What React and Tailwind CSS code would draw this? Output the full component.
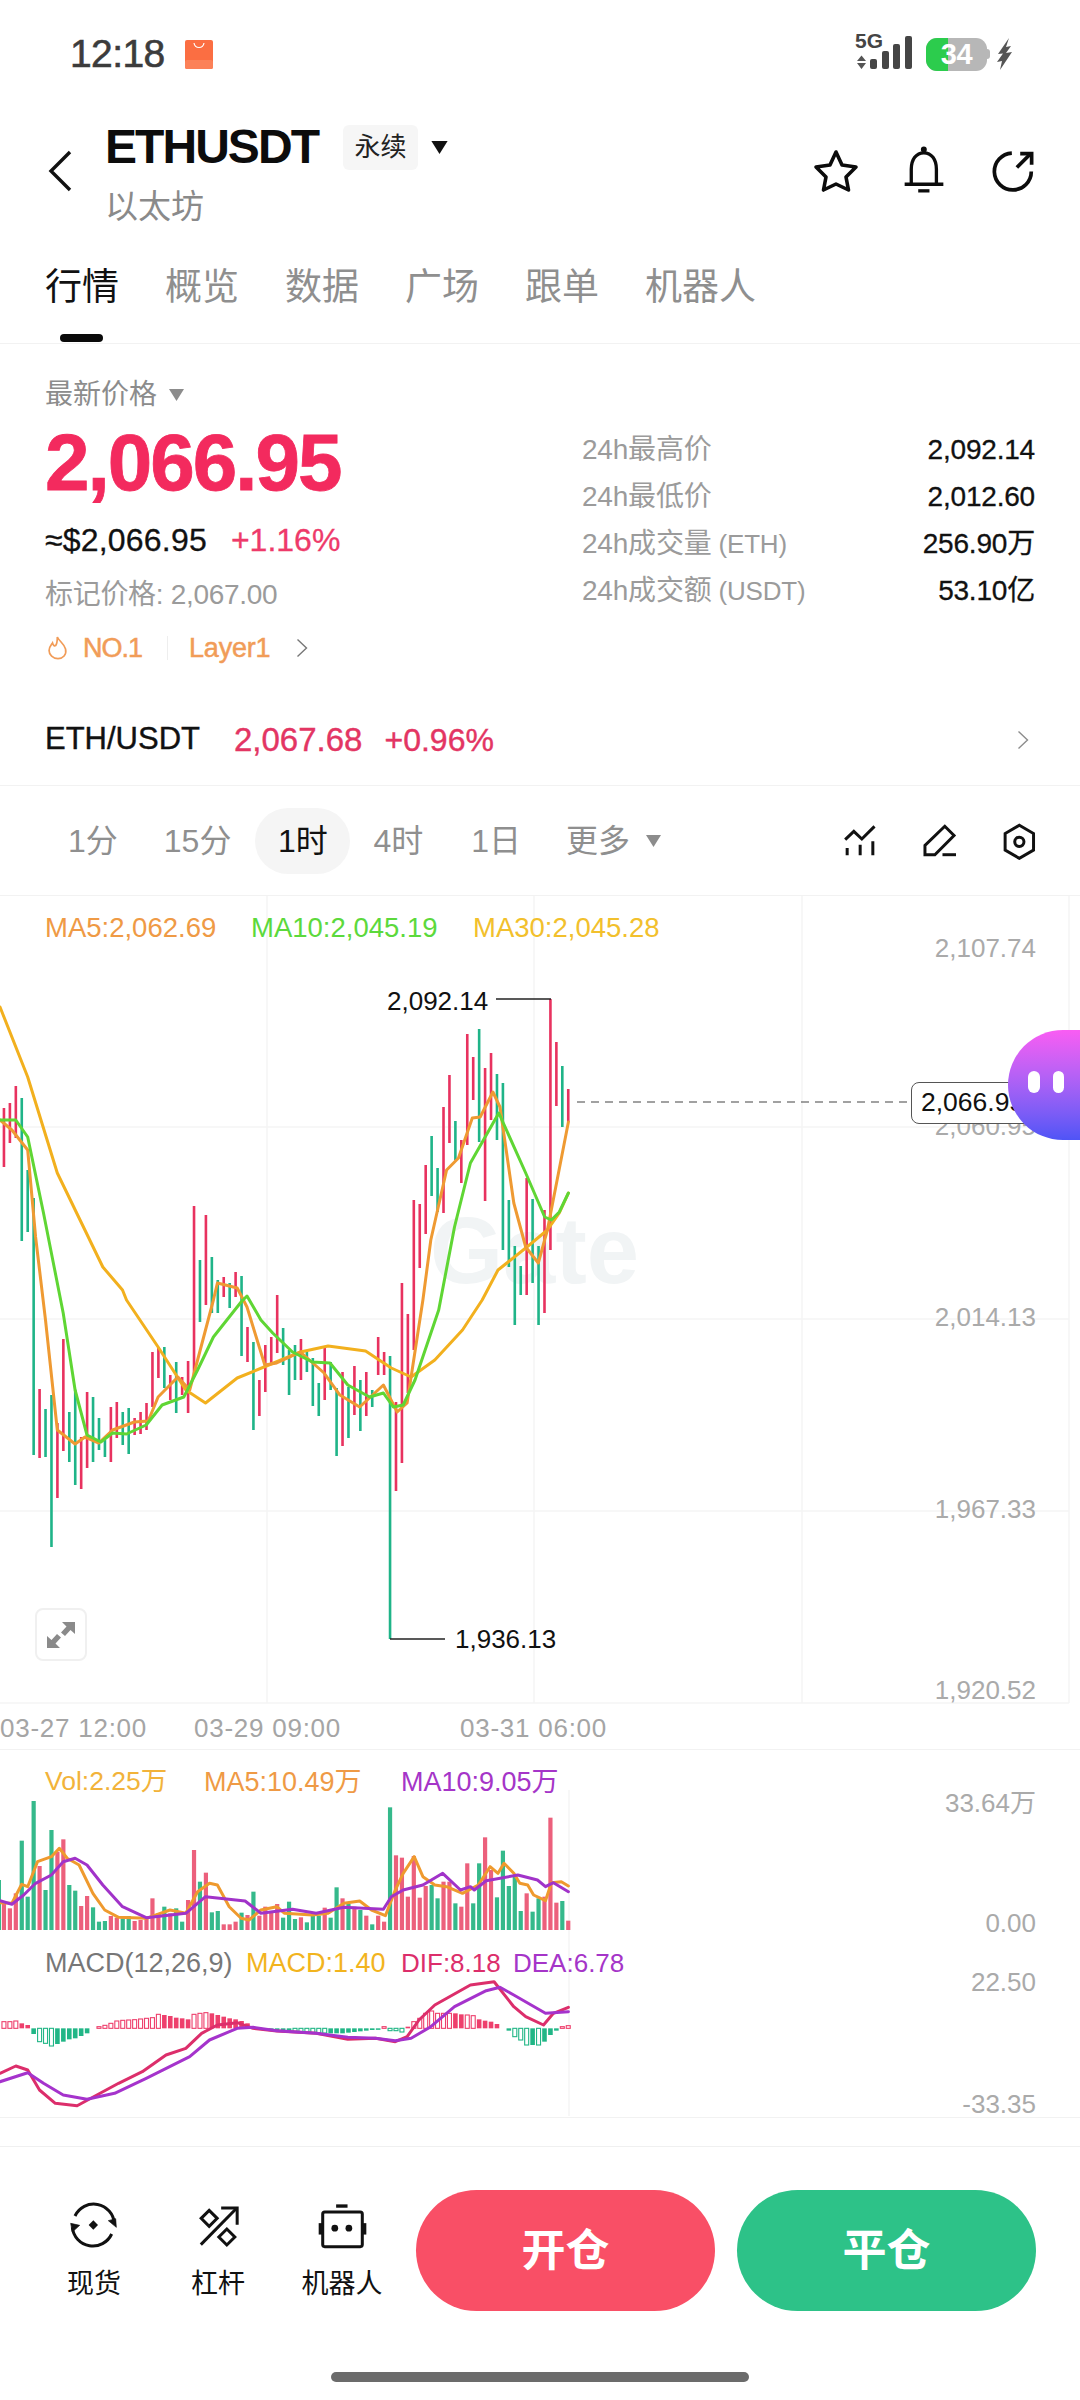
const R = "#e8325f";
const G = "#1fb488";
const X = (i) => 3.95 + 5.94 * i;
const ZX = (z) => z / 2.53;

// [top, bottom, red?] for each candle, in page pixels
const candles = [
  [1108,1167,1],[1103,1143,1],[1086,1138,1],[1098,1241,0],[1170,1232,0],[1198,1455,0],[1389,1458,1],[1409,1457,0],
  [1395,1547,0],[1423,1498,1],[1339,1451,1],[1412,1462,0],[1390,1485,0],[1437,1489,1],[1392,1468,1],[1397,1462,0],
  [1418,1450,0],[1440,1457,0],[1407,1462,1],[1402,1438,1],[1412,1445,0],[1408,1454,0],[1418,1435,1],[1412,1434,1],
  [1403,1430,1],[1352,1407,1],[1347,1378,1],[1347,1388,0],[1375,1400,1],[1362,1413,0],[1377,1395,1],[1361,1413,1],
  [1206,1377,1],[1260,1322,0],[1215,1305,1],[1257,1313,0],[1280,1313,0],[1277,1297,1],[1283,1308,0],[1272,1297,1],
  [1276,1356,0],[1327,1362,1],[1342,1430,0],[1380,1416,1],[1345,1392,1],[1337,1363,1],[1295,1353,1],[1328,1365,0],
  [1350,1395,0],[1345,1380,0],[1339,1380,1],[1352,1372,0],[1358,1406,0],[1383,1416,0],[1347,1400,1],[1362,1390,0],
  [1388,1456,0],[1372,1446,1],[1387,1438,0],[1366,1415,1],[1380,1431,0],[1372,1416,1],[1390,1407,0],[1337,1375,1],
  [1352,1375,1],[1356,1639,0],[1402,1491,1],[1283,1463,1],[1314,1393,1],[1200,1350,1],[1204,1268,1],[1165,1234,1],
  [1136,1196,0],[1168,1212,0],[1107,1213,1],[1075,1143,1],[1121,1160,0],[1140,1183,1],[1034,1145,1],[1057,1100,1],
  [1029,1142,0],[1068,1201,1],[1053,1120,1],[1074,1140,0],[1083,1250,0],[1200,1267,0],[1246,1325,0],[1266,1295,0],
  [1178,1295,1],[1199,1283,0],[1246,1325,0],[1210,1313,1],[999,1250,1],[1042,1106,1],[1066,1127,0],[1089,1122,1],
];

const ma30 = [[0,1007],[70,1077],[145,1173],[260,1267],[310,1290],[320,1300],[400,1347],[470,1390],[520,1403],[600,1378],[680,1365],[760,1352],[830,1346],[925,1351],[990,1368],[1040,1377],[1100,1360],[1170,1330],[1220,1300],[1260,1270],[1330,1248],[1385,1230],[1415,1213],[1438,1193]];
const ma10 = [[0,1120],[40,1120],[70,1137],[110,1213],[160,1313],[190,1390],[220,1435],[255,1442],[285,1433],[320,1434],[370,1425],[410,1405],[465,1397],[500,1370],[540,1337],[610,1302],[625,1296],[660,1320],[690,1333],[740,1352],[790,1362],[835,1363],[880,1385],[935,1397],[970,1393],[995,1407],[1020,1405],[1050,1380],[1110,1310],[1150,1227],[1190,1163],[1262,1113],[1330,1173],[1378,1217],[1395,1220],[1415,1212],[1438,1193]];
const ma5 = [[0,1120],[30,1130],[70,1150],[90,1237],[115,1320],[145,1430],[190,1444],[215,1437],[250,1443],[285,1430],[340,1422],[375,1421],[400,1397],[450,1377],[480,1390],[540,1300],[550,1283],[600,1288],[625,1307],[670,1365],[700,1363],[760,1352],[820,1373],[860,1395],[910,1407],[970,1385],[1005,1412],[1030,1403],[1070,1300],[1090,1240],[1130,1170],[1160,1158],[1195,1118],[1215,1117],[1247,1092],[1265,1107],[1300,1203],[1330,1247],[1362,1263],[1385,1230],[1438,1122]];

// top of the volume bar (zoomed units), red?
const vol = [[458,1],[475,1],[430,1],[272,0],[440,0],[153,0],[348,1],[420,0],[240,0],[305,1],[268,1],[405,0],[422,0],[468,1],[438,1],[472,0],[515,0],[513,0],[498,1],[503,1],[505,0],[498,0],[513,1],[510,1],[503,1],[445,1],[490,1],[470,0],[490,1],[475,0],[515,0],[450,1],[300,1],[395,0],[368,1],[487,0],[483,0],[523,1],[523,1],[515,1],[488,0],[495,1],[425,0],[497,1],[470,1],[488,1],[462,1],[503,0],[455,0],[507,0],[502,1],[517,0],[495,0],[497,0],[473,1],[503,0],[412,0],[445,1],[462,0],[470,1],[480,0],[497,1],[523,0],[497,1],[515,1],[172,0],[316,1],[323,1],[440,1],[318,1],[443,1],[408,1],[405,0],[445,0],[395,1],[395,1],[460,0],[470,1],[340,1],[460,0],[340,0],[262,1],[360,1],[442,0],[302,0],[408,0],[380,0],[483,0],[430,1],[485,0],[445,0],[440,1],[203,1],[458,1],[453,0],[512,1]];
const volMa5 = [[0,458],[30,460],[55,403],[70,410],[95,335],[130,320],[150,295],[170,325],[200,345],[235,430],[265,480],[300,502],[370,505],[430,480],[470,490],[500,425],[530,400],[550,405],[580,470],[610,505],[630,510],[660,480],[700,470],[720,490],[790,495],[830,490],[870,460],[910,453],[940,480],[975,497],[1000,420],[1020,370],[1048,320],[1070,380],[1100,405],[1130,410],[1170,430],[1210,405],[1240,350],[1260,370],[1275,340],[1300,370],[1315,400],[1335,405],[1350,435],[1380,452],[1395,398],[1420,395],[1438,408]];
const volMa10 = [[0,452],[30,463],[60,435],[90,400],[130,375],[160,335],[190,325],[220,345],[260,405],[310,470],[370,503],[470,490],[520,440],[620,453],[660,490],[740,478],[800,490],[870,472],[970,478],[990,440],[1020,420],[1070,405],[1120,370],[1165,420],[1190,410],[1200,420],[1230,392],[1310,375],[1360,390],[1380,410],[1400,398],[1438,425]];

const dif = [[0,970],[40,948],[70,960],[100,1020],[140,1060],[195,1067],[230,1045],[300,1000],[360,965],[420,915],[470,895],[510,850],[550,825],[600,818],[640,835],[700,843],[800,850],[880,868],[950,865],[1000,875],[1030,860],[1060,810],[1100,765],[1190,705],[1250,695],[1300,770],[1330,800],[1375,825],[1400,790],[1438,772]];
const dea = [[0,995],[70,968],[110,1000],[160,1035],[220,1048],[290,1030],[370,985],[480,920],[530,870],[600,835],[640,832],[700,842],[800,850],[880,862],[950,865],[1000,872],[1040,865],[1090,830],[1150,770],[1230,722],[1265,712],[1300,735],[1380,790],[1438,785]];

// index, end of bar (zoomed units), hollow?
const macd = [[0,815,1],[1,815,1],[2,813,1],[3,820,0],[4,825,0],[5,852,0],[6,875,1],[7,880,1],[8,888,1],[9,882,0],[10,875,0],[11,868,0],[12,865,0],[13,858,0],[14,850,0],[16,830,1],[17,826,1],[18,820,1],[19,813,1],[20,811,1],[21,810,1],[22,809,1],[23,807,1],[24,805,1],[25,803,1],[26,793,1],[27,795,0],[28,798,0],[29,803,0],[30,805,0],[31,808,0],[32,793,1],[33,790,1],[34,788,1],[35,790,0],[36,795,0],[37,800,0],[38,805,0],[39,808,0],[40,813,0],[41,820,0],[42,830,0],[43,840,0],[44,840,0],[45,840,0],[46,840,0],[47,840,0],[48,842,0],[49,844,1],[50,845,1],[51,847,1],[52,848,1],[53,848,1],[54,849,1],[55,850,0],[56,850,0],[57,850,0],[58,848,0],[59,846,0],[60,844,0],[61,842,0],[62,840,0],[63,838,0],[64,830,1],[65,842,1],[66,842,1],[67,846,1],[68,830,0],[69,815,1],[70,805,1],[71,790,1],[72,783,1],[73,790,1],[74,790,1],[75,790,1],[76,790,0],[77,793,0],[78,795,1],[79,797,1],[80,808,0],[81,812,0],[82,815,0],[83,822,0],[85,842,0],[86,860,1],[87,870,1],[88,885,1],[89,885,0],[90,885,1],[91,875,0],[92,855,0],[93,842,0],[94,830,1],[95,827,1]];

const pts = (a, base) => a.map(([x, y]) => `${ZX(x).toFixed(1)},${(base === undefined ? y : base + y / 3).toFixed(1)}`).join(" ");

function Line({ data, base, color, w = 3 }) {
  return <polyline points={pts(data, base)} fill="none" stroke={color} strokeWidth={w} strokeLinejoin="round" strokeLinecap="round" />;
}

function Tri({ className, color = "#8c8c8c" }) {
  return (
    <svg className={className} viewBox="0 0 10 8">
      <path d="M0 0H10L5 8Z" fill={color} />
    </svg>
  );
}

function Chevron({ className, color, w = 1.4 }) {
  return (
    <svg className={className} viewBox="0 0 12 20" fill="none">
      <path d="M1.5 1.5L10.5 10L1.5 18.5" stroke={color} strokeWidth={w} />
    </svg>
  );
}

function StatusBar() {
  return (
    <div className="h-[108px] flex items-center pl-[70px] pr-[68px]">
      <span className="text-[39px] [-webkit-text-stroke:0.6px_currentColor] tracking-[-0.6px] text-[#3c3c3c]">12:18</span>
      <svg className="ml-[20px] w-[28px] h-[29px]" viewBox="0 0 28 29">
        <rect width="28" height="29" rx="2" fill="#fb6e42" />
        <rect y="20" width="28" height="9" rx="2" fill="#fc8158" />
        <path d="M9 3C10 9 18 9 19 3" stroke="#fff" strokeWidth="1.2" fill="none" />
      </svg>
      <div className="ml-auto flex items-center">
        <div className="relative w-[58px] h-[40px]">
          <span className="absolute left-0 -top-[5px] text-[21px] font-bold leading-[24px] text-[#454545]">5G</span>
          <svg className="absolute left-0 top-0 w-[58px] h-[40px]" viewBox="0 0 58 40">
            <path d="M2 27H11L6.5 21.5ZM2 29H11L6.5 35Z" fill="#555" />
            <rect x="15" y="25" width="7" height="10" rx="2" fill="#454545" />
            <rect x="27" y="17" width="7" height="18" rx="2" fill="#454545" />
            <rect x="38" y="10" width="7" height="25" rx="2" fill="#454545" />
            <rect x="50" y="2" width="7" height="33" rx="2" fill="#454545" />
          </svg>
        </div>
        <div className="ml-[13px] relative w-[61px] h-[33px] rounded-[11px] bg-[#b7b7b7] overflow-hidden flex items-center justify-center">
          <div className="absolute left-0 top-0 bottom-0 w-[22px] bg-[#2ccc4d]" />
          <span className="relative text-[29px] leading-none font-bold tracking-[-0.5px] text-white">34</span>
        </div>
        <div className="w-[3px] h-[10px] rounded-r-sm bg-[#b7b7b7]" />
        <svg className="ml-[7px] w-[15px] h-[32px]" viewBox="0 0 15 32">
          <path d="M12 0L1 16L6 15.5L0 24L5 23L3 32L15 14L9 15L14 8L9 9Z" fill="#555" />
        </svg>
      </div>
    </div>
  );
}

function Header() {
  return (
    <div className="h-[126px] flex items-center pl-[48px] pr-[43px]">
      <svg className="w-[24px] h-[42px]" viewBox="0 0 24 42" fill="none">
        <path d="M22 2L3 21L22 40" stroke="#111" strokeWidth="3.4" />
      </svg>
      <div className="ml-[33px] flex flex-col">
        <div className="h-[46px] mt-[12px] flex items-center">
          <span className="text-[48px] font-bold tracking-[-1.95px] text-[#0c0c0c]">ETHUSDT</span>
          <span className="ml-[25px] w-[75px] h-[45px] rounded-md bg-[#f6f6f6] flex items-center justify-center text-[26px] text-[#222]">永续</span>
          <Tri className="ml-[12px] w-[19px] h-[13px]" color="#111" />
        </div>
        <div className="mt-[14px] text-[33px] leading-[46px] text-[#8a8a8a]">以太坊</div>
      </div>
      <div className="ml-auto flex items-center gap-[44px]">
        <svg className="w-[46px] h-[44px]" viewBox="0 0 46 44" fill="none">
          <path d="M23 3L29 16L43 18L33 28L35.5 41L23 35L10.500 41L13 28L3 18L17 16Z" stroke="#0c0c0c" strokeWidth="3.6" strokeLinejoin="round" />
        </svg>
        <svg className="w-[43px] h-[50px]" viewBox="310 410 130 150" fill="none" stroke="#0c0c0c" strokeWidth="10">
          <path d="M335 525V480C335 450 350 430 373 430C396 430 411 450 411 480V525" />
          <path d="M315 525H432" />
          <path d="M356 545H390" />
          <circle cx="373" cy="420" r="4" fill="#0c0c0c" />
        </svg>
        <svg className="w-[47px] h-[47px]" viewBox="570 420 140 140" fill="none" stroke="#0c0c0c" strokeWidth="11">
          <path d="M635 435A55 55 0 1 0 693 490" />
          <path d="M650 478L690 438" />
          <path d="M660 437H694V470" />
        </svg>
      </div>
    </div>
  );
}

function Tabs() {
  return (
    <div className="relative h-[110px] border-b border-[#f2f2f2] flex items-center gap-[46px] pl-[45px] pb-[2px] text-[37px] text-[#8f8f8f]">
      <span className="text-[#111]">行情</span>
      <span>概览</span>
      <span>数据</span>
      <span>广场</span>
      <span>跟单</span>
      <span>机器人</span>
      <div className="absolute left-[60px] top-[100px] w-[43px] h-[8px] rounded-full bg-[#0a0a0a]" />
    </div>
  );
}

function Stat({ label, suffix, value }) {
  return (
    <div className="h-[47px] flex items-center justify-between">
      <span className="text-[28px] tracking-[-0.2px] text-[#9b9b9b]">
        {label}
        {suffix && <span className="text-[26px]"> {suffix}</span>}
      </span>
      <span className="text-[28px] [-webkit-text-stroke:0.3px_currentColor] tracking-[-0.2px] text-[#111]">{value}</span>
    </div>
  );
}

function PriceSection() {
  return (
    <div className="flex pl-[45px] pr-[45px] pb-[18px]">
      <div className="w-[537px] pt-[29px]">
        <div className="h-[43px] flex items-center text-[28px] text-[#8c8c8c]">
          最新价格
          <Tri className="ml-[11px] w-[17px] h-[12px]" color="#8c8c8c" />
        </div>
        <div className="h-[94px] flex items-center text-[80px] font-bold [-webkit-text-stroke:0.8px_currentColor] tracking-[-2px] text-[#f32a5e]">2,066.95</div>
        <div className="h-[60px] flex items-center text-[32px]">
          <span className="tracking-[0.2px] [-webkit-text-stroke:0.3px_currentColor] text-[#111]">≈$2,066.95</span>
          <span className="ml-[24px] [-webkit-text-stroke:0.3px_currentColor] text-[#ee3a6a]">+1.16%</span>
        </div>
        <div className="h-[50px] flex items-center text-[28px] tracking-[-0.3px] text-[#9b9b9b]">标记价格: 2,067.00</div>
        <div className="h-[56px] flex items-center text-[27px] [-webkit-text-stroke:0.5px_currentColor] text-[#f19c58]">
          <svg className="ml-[2px] w-[22px] h-[24px]" viewBox="0 0 60 70" fill="none">
            <path d="M28 3C33 15 48 22 52 38C56 55 44 66 30 66C15 66 4 55 4 42C4 32 10 26 14 20C16 28 20 30 23 28C28 22 28 12 28 3Z" stroke="#f19c58" strokeWidth="5" />
          </svg>
          <span className="ml-[14px] tracking-[-1px]">NO.1</span>
          <div className="ml-[25px] w-px h-[24px] bg-[#eeeeee]" />
          <span className="ml-[21px] tracking-[-0.2px]">Layer1</span>
          <Chevron className="ml-[26px] w-[12px] h-[20px]" color="#777" />
        </div>
      </div>
      <div className="flex-1 pt-[82px]">
        <Stat label="24h最高价" value="2,092.14" />
        <Stat label="24h最低价" value="2,012.60" />
        <Stat label="24h成交量" suffix="(ETH)" value="256.90万" />
        <Stat label="24h成交额" suffix="(USDT)" value="53.10亿" />
      </div>
    </div>
  );
}

function PairRow() {
  return (
    <div className="h-[92px] border-b border-[#f2f2f2] flex items-center pl-[45px] pr-[51px] [-webkit-text-stroke:0.4px_currentColor]">
      <span className="text-[31px] text-[#111]">ETH/USDT</span>
      <span className="ml-[34px] text-[33px] text-[#e33563]">2,067.68</span>
      <span className="ml-[22px] text-[32px] text-[#e33563]">+0.96%</span>
      <Chevron className="ml-auto w-[12px] h-[20px]" color="#8c8c8c" />
    </div>
  );
}

function Timeframes() {
  return (
    <div className="h-[110px] border-b border-[#f2f2f2] flex items-center pr-[43px] text-[32px] text-[#8f8f8f]">
      <span className="ml-[68px]">1分</span>
      <span className="ml-[46px]">15分</span>
      <span className="ml-[24px] w-[95px] h-[66px] rounded-full bg-[#f5f5f5] flex items-center justify-center text-[#111]">1时</span>
      <span className="ml-[23px]">4时</span>
      <span className="ml-[48px]">1日</span>
      <span className="ml-[45px]">更多</span>
      <Tri className="ml-[15px] w-[17px] h-[12px]" color="#8c8c8c" />
      <div className="ml-auto flex items-center gap-[43px]">
        <svg className="w-[37px] h-[35px]" viewBox="30 55 110 105" fill="none" stroke="#111" strokeWidth="9">
          <path d="M42 105L68 80L92 103L130 65" />
          <path d="M48 130V152M87 120V152M125 110V152" />
        </svg>
        <svg className="w-[38px] h-[37px]" viewBox="270 50 115 110" fill="none" stroke="#111" strokeWidth="9">
          <path d="M282 148V120L342 62L370 90L312 148Z" />
          <path d="M335 148H376" />
        </svg>
        <svg className="w-[35px] h-[38px]" viewBox="515 50 105 115" fill="none" stroke="#111" strokeWidth="9">
          <path d="M567 60L610 85V135L567 160L524 135V85Z" />
          <circle cx="567" cy="110" r="14" />
        </svg>
      </div>
    </div>
  );
}

function Grid() {
  return (
    <g stroke="#f4f4f4" strokeWidth="1.5">
      {[1127, 1319, 1511, 1703].map((y) => <line key={y} x1="0" x2="1069" y1={y} y2={y} />)}
      {[267, 534, 802, 1069].map((x) => <line key={x} x1={x} x2={x} y1="896" y2="1703" />)}
    </g>
  );
}

function MainChart() {
  const axis = "absolute right-[44px] -translate-y-1/2 text-[26px] text-[#aaaaaa]";
  const time = "absolute top-[832px] -translate-y-1/2 text-[26px] tracking-[0.75px] text-[#a5a5a5]";
  return (
    <div className="relative h-[854px] border-b border-[#f2f2f2]">
      <div className="absolute left-[430px] top-[354px] -translate-y-1/2 text-[94px] font-bold text-[#f1f4f5]">Gate</div>
      <svg className="absolute left-0 top-0 w-[1080px] h-[854px]" viewBox="0 896 1080 854" fill="none">
        <Grid />
        {candles.map(([t, b, r], i) => (
          <rect key={i} x={X(i) - 1.3} y={t} width="2.6" height={b - t} fill={r ? R : G} />
        ))}
        <Line data={ma30} color="#f2b01e" />
        <Line data={ma5} color="#ef9a32" />
        <Line data={ma10} color="#5fd634" />
        <path d="M496 999H551" stroke="#222" strokeWidth="1.4" />
        <path d="M390 1639H445" stroke="#222" strokeWidth="1.4" />
        <path d="M577 1102H908" stroke="#444" strokeWidth="1.2" strokeDasharray="8 6" />
      </svg>
      <div className="absolute top-[32px] left-[45px] -translate-y-1/2 text-[27.5px] text-[#ef9a45]">MA5:2,062.69</div>
      <div className="absolute top-[32px] left-[251px] -translate-y-1/2 text-[27.5px] text-[#5cd93c]">MA10:2,045.19</div>
      <div className="absolute top-[32px] left-[473px] -translate-y-1/2 text-[27.5px] text-[#f2c02c]">MA30:2,045.28</div>
      <div className="absolute top-[105px] left-[387px] -translate-y-1/2 text-[26px] text-[#111]">2,092.14</div>
      <div className="absolute top-[743px] left-[455px] -translate-y-1/2 text-[26px] text-[#111]">1,936.13</div>
      <div className={`${axis} top-[52px]`}>2,107.74</div>
      <div className={`${axis} top-[230px]`}>2,060.95</div>
      <div className={`${axis} top-[421px]`}>2,014.13</div>
      <div className={`${axis} top-[613px]`}>1,967.33</div>
      <div className={`${axis} top-[794px]`}>1,920.52</div>
      <div className={`${time} left-0`}>03-27 12:00</div>
      <div className={`${time} left-[194px]`}>03-29 09:00</div>
      <div className={`${time} left-[460px]`}>03-31 06:00</div>
      <div className="absolute left-[911px] top-[186px] w-[130px] h-[42px] rounded-lg border border-[#555] bg-white flex items-center pl-[9px] text-[26.5px] text-[#111]">2,066.95</div>
      <div className="absolute left-[1008px] top-[134px] w-[72px] h-[110px] rounded-l-[55px] bg-gradient-to-b from-[#f95cf3] to-[#4f54f6] flex items-center gap-[13px] pl-[20px] pb-[6px]">
        <div className="w-[12px] h-[22px] rounded-full bg-white" />
        <div className="w-[11px] h-[22px] rounded-full bg-white" />
      </div>
      <div className="absolute left-[35px] top-[712px] w-[52px] h-[53px] rounded-lg border-2 border-[#f0f0f0] bg-white flex items-center justify-center">
        <svg className="w-[28px] h-[26px]" viewBox="0 0 28 26" fill="#8a8a8a">
          <path d="M15 0H28V12L23.500 8L18 14L14 10.500L19.500 4.500Z" />
          <path d="M13 26H0V14L4.500 18L10 12L14 15.500L8.500 21.500Z" />
        </svg>
      </div>
    </div>
  );
}

function VolChart() {
  return (
    <div className="relative h-[195px]">
      <svg className="absolute left-0 top-0 w-[1080px] h-[195px]" viewBox="0 1750 1080 195" fill="none">
        <line x1="569" x2="569" y1="1790" y2="1945" stroke="#f4f4f4" strokeWidth="1.5" />
        <rect x="-3" y={1750 + 390 / 3} width="4" height={150 / 3} fill="#35b98b" />
        {vol.map(([t, r], i) => (
          <rect key={i} x={X(i) - 2.1} y={1750 + t / 3} width="4.2" height={(540 - t) / 3} fill={r ? "#ec607c" : "#35b98b"} />
        ))}
        <Line data={volMa5} base={1750} color="#ef9a2e" />
        <Line data={volMa10} base={1750} color="#a133c9" />
      </svg>
      <div className="absolute top-[32px] left-[45px] -translate-y-1/2 text-[26.5px] text-[#f2b33a]">Vol:2.25万</div>
      <div className="absolute top-[32px] left-[204px] -translate-y-1/2 text-[27px] text-[#ef9a45]">MA5:10.49万</div>
      <div className="absolute top-[32px] left-[401px] -translate-y-1/2 text-[27px] text-[#a535c8]">MA10:9.05万</div>
      <div className="absolute top-[53px] right-[44px] -translate-y-1/2 text-[26px] text-[#aaaaaa]">33.64万</div>
      <div className="absolute top-[173px] right-[44px] -translate-y-1/2 text-[26px] text-[#aaaaaa]">0.00</div>
    </div>
  );
}

function MacdChart() {
  const y0 = 1750 + 835 / 3;
  return (
    <div className="relative h-[173px] border-b border-[#f2f2f2]">
      <svg className="absolute left-0 top-0 w-[1080px] h-[173px]" viewBox="0 1945 1080 173" fill="none">
        <line x1="569" x2="569" y1="1945" y2="2116" stroke="#f4f4f4" strokeWidth="1.5" />
        {macd.map(([i, z, h]) => {
          const y = 1750 + z / 3;
          const up = y < y0;
          const c = up ? "#ee3f6c" : "#21b686";
          const top = Math.min(y, y0);
          const ht = Math.max(Math.abs(y - y0), 1.5);
          return h ? (
            <rect key={i} x={X(i) - 2} y={top} width="4" height={ht} fill="#fff" stroke={c} strokeWidth="1.1" />
          ) : (
            <rect key={i} x={X(i) - 2.3} y={top} width="4.6" height={ht} fill={c} />
          );
        })}
        <Line data={dif} base={1750} color="#dc2e6b" />
        <Line data={dea} base={1750} color="#a533cc" />
      </svg>
      <div className="absolute top-[18px] left-[45px] -translate-y-1/2 text-[27px] text-[#777777]">MACD(12,26,9)</div>
      <div className="absolute top-[18px] left-[246px] -translate-y-1/2 text-[27px] text-[#f2b41e]">MACD:1.40</div>
      <div className="absolute top-[18px] left-[401px] -translate-y-1/2 text-[26px] text-[#dc2e6b]">DIF:8.18</div>
      <div className="absolute top-[18px] left-[513px] -translate-y-1/2 text-[26px] text-[#a535c8]">DEA:6.78</div>
      <div className="absolute top-[37px] right-[44px] -translate-y-1/2 text-[26px] text-[#aaaaaa]">22.50</div>
      <div className="absolute top-[159px] right-[44px] -translate-y-1/2 text-[26px] text-[#aaaaaa]">-33.35</div>
    </div>
  );
}

function ClippedRow() {
  return (
    <div className="relative h-[28px] overflow-hidden">
      <div className="absolute left-[47px] top-[25px] text-[26px] leading-[30px] text-[#888888]">MMM</div>
      <div className="absolute left-[116px] top-[25px] text-[26px] leading-[30px] text-[#888888]">MA</div>
    </div>
  );
}

function BottomItem({ label, children }) {
  return (
    <div className="w-[124px] flex flex-col items-center pt-[10px]">
      <div className="h-[50px] flex items-center justify-center">{children}</div>
      <div className="mt-[18px] text-[27px] leading-[32px] text-[#111]">{label}</div>
    </div>
  );
}

function BottomBar() {
  return (
    <div className="border-t border-[#f0f0f0]">
      <div className="flex pl-[32px] pt-[43px]">
        <BottomItem label="现货">
          <svg className="w-[50px] h-[50px]" viewBox="60 30 150 150" fill="none" stroke="#111" strokeWidth="9">
            <path d="M78 78A62 62 0 0 1 196 100" />
            <path d="M70 112A62 62 0 0 0 188 132" />
            <path d="M178 92L202 112L200 86Z" fill="#111" strokeWidth="2" />
            <path d="M65 100L92 106L70 126Z" fill="#111" strokeWidth="2" />
            <path d="M133 91L147 105L133 119L119 105Z" fill="#111" stroke="none" />
          </svg>
        </BottomItem>
        <BottomItem label="杠杆">
          <svg className="w-[47px] h-[45px]" viewBox="430 40 140 135" fill="none" stroke="#111" strokeWidth="9">
            <path d="M447 165L555 55" />
            <path d="M508 55H556V105" />
            <path d="M472 62L496 86L472 110L448 86Z" />
            <path d="M525 118L549 142L525 166L501 142Z" />
          </svg>
        </BottomItem>
        <BottomItem label="机器人">
          <svg className="w-[52px] h-[47px]" viewBox="800 35 155 140" fill="none">
            <rect x="820" y="65" width="118" height="103" rx="6" stroke="#111" strokeWidth="9" />
            <rect x="860" y="42" width="34" height="10" fill="#111" />
            <rect x="808" y="98" width="10" height="34" fill="#111" />
            <rect x="940" y="98" width="10" height="34" fill="#111" />
            <circle cx="856" cy="113" r="10" fill="#111" />
            <circle cx="898" cy="113" r="10" fill="#111" />
          </svg>
        </BottomItem>
        <div className="ml-[12px] w-[299px] h-[121px] rounded-full bg-[#f94f66] flex items-center justify-center text-[44px] font-bold text-white">开仓</div>
        <div className="ml-[22px] w-[299px] h-[121px] rounded-full bg-[#2dc288] flex items-center justify-center text-[44px] font-bold text-white">平仓</div>
      </div>
      <div className="mt-[61px] mx-auto w-[418px] h-[10px] rounded-full bg-[#6b6b6b]" />
    </div>
  );
}

export default function App() {
  return (
    <div className="relative w-[1080px] h-[2400px] overflow-hidden bg-white font-['Liberation_Sans','Noto_Sans_CJK_SC',sans-serif]">
      <StatusBar />
      <Header />
      <Tabs />
      <PriceSection />
      <PairRow />
      <Timeframes />
      <MainChart />
      <VolChart />
      <MacdChart />
      <ClippedRow />
      <BottomBar />
    </div>
  );
}
